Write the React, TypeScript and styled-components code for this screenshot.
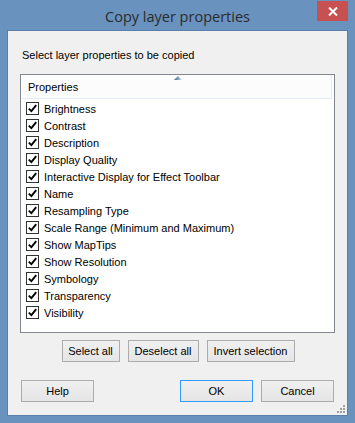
import React from "react";
import styled, { createGlobalStyle, css } from "styled-components";

const Global = createGlobalStyle`
  html, body { margin: 0; padding: 0; }
  body { width: 355px; height: 423px; overflow: hidden; background: #6a94c0; }
`;

const Win = styled.div`
  width: 355px;
  height: 423px;
  box-sizing: border-box;
  background: #6992bf;
  padding: 0 7px 7px 7px;
  display: flex;
  flex-direction: column;
  font-family: "Liberation Sans", Arial, sans-serif;
`;

const TitleBar = styled.div`
  position: relative;
  height: 30px;
  display: flex;
  align-items: center;
  justify-content: center;
  flex: none;
`;

const Title = styled.div`
  font-family: "Open Sans", "Noto Sans", sans-serif;
  font-size: 14.5px;
  color: #2b2b2b;
  margin-top: 2px;
  letter-spacing: 0;
`;

const Close = styled.div`
  position: absolute;
  top: 1px;
  right: 0px;
  width: 31px;
  height: 20px;
  background: #c75050;
  display: flex;
  align-items: center;
  justify-content: center;
`;

const Client = styled.div`
  flex: 1;
  border: 1px solid #5a7fa8;
  background: #f0f0f0;
  display: flex;
  flex-direction: column;
  position: relative;
`;

const Label = styled.div`
  font-size: 11px;
  line-height: 13px;
  color: #000;
  margin: 18px 0 0 14px;
`;

const List = styled.div`
  margin: 12px 0 0 12px;
  width: 315px;
  height: 259px;
  box-sizing: border-box;
  border: 1px solid #828790;
  background: #fff;
  display: flex;
  flex-direction: column;
`;

const Header = styled.div`
  position: relative;
  height: 24px;
  margin-right: 2px;
  box-sizing: border-box;
  background: #fcfcfc;
  border-bottom: 1px solid #e3ecf6;
  border-right: 1px solid #e3ecf6;
  display: flex;
  align-items: center;
  padding-left: 7px;
  font-size: 11px;
  color: #000;
`;

const SortArrow = styled.svg`
  position: absolute;
  left: 153px;
  top: 1px;
`;

const Rows = styled.div`
  display: flex;
  flex-direction: column;
  padding-top: 1px;
`;

const Row = styled.div`
  height: 17px;
  display: flex;
  align-items: center;
  padding-left: 5px;
  font-size: 11px;
  color: #000;
`;

const Box = styled.div`
  width: 13px;
  height: 13px;
  box-sizing: border-box;
  border: 1px solid #333;
  background: #fff;
  display: flex;
  align-items: center;
  justify-content: center;
  margin-right: 5px;
  flex: none;
`;

const ActionRow = styled.div`
  display: flex;
  justify-content: center;
  gap: 8px;
  margin-top: 7px;
  padding-left: 1px;
`;

const Btn = styled.div<{ $w: number; $default?: boolean }>`
  width: ${(p) => p.$w}px;
  height: 22px;
  box-sizing: border-box;
  border: 1px solid #acacac;
  background: linear-gradient(#f0f0f0, #e5e5e5);
  display: flex;
  align-items: center;
  justify-content: center;
  font-size: 11px;
  color: #000;
  ${(p) =>
    p.$default &&
    css`
      border-color: #3399ff;
      background: linear-gradient(#ecf4fc, #dcecfc);
      background: linear-gradient(#f0f0f0, #e5e5e5);
    `}
`;

const BottomRow = styled.div`
  display: flex;
  margin-top: 18px;
  padding: 0 13px;
  gap: 8px;
`;

const Spacer = styled.div`
  flex: 1;
`;

const Grip = styled.svg`
  position: absolute;
  right: 2px;
  bottom: 2px;
`;

const items = [
  "Brightness",
  "Contrast",
  "Description",
  "Display Quality",
  "Interactive Display for Effect Toolbar",
  "Name",
  "Resampling Type",
  "Scale Range (Minimum and Maximum)",
  "Show MapTips",
  "Show Resolution",
  "Symbology",
  "Transparency",
  "Visibility",
];

const Check = () => (
  <svg width="9" height="9" viewBox="0 0 9 9">
    <path d="M0.8 4.6 L3.4 7.2 L8.2 1.2" fill="none" stroke="#000" strokeWidth="1.9" />
  </svg>
);

export default function App() {
  return (
    <>
      <Global />
      <Win>
        <TitleBar>
          <Title>Copy layer properties</Title>
          <Close>
            <svg width="10" height="9" viewBox="0 0 10 9">
              <path d="M1 0.5 L9 8.5 M9 0.5 L1 8.5" stroke="#fff" strokeWidth="2" />
            </svg>
          </Close>
        </TitleBar>
        <Client>
          <Label>Select layer properties to be copied</Label>
          <List>
            <Header>
              Properties
              <SortArrow width="8" height="4" viewBox="0 0 8 4">
                <defs>
                  <linearGradient id="ga" x1="0" y1="0" x2="1" y2="0">
                    <stop offset="0" stopColor="#3c5e80" />
                    <stop offset="1" stopColor="#c6e2f6" />
                  </linearGradient>
                </defs>
                <path d="M0 4 L4 0 L8 4 Z" fill="url(#ga)" />
              </SortArrow>
            </Header>
            <Rows>
              {items.map((t) => (
                <Row key={t}>
                  <Box>
                    <Check />
                  </Box>
                  {t}
                </Row>
              ))}
            </Rows>
          </List>
          <ActionRow>
            <Btn $w={58}>Select all</Btn>
            <Btn $w={71}>Deselect all</Btn>
            <Btn $w={88}>Invert selection</Btn>
          </ActionRow>
          <BottomRow>
            <Btn $w={73}>Help</Btn>
            <Spacer />
            <Btn $w={73} $default>
              OK
            </Btn>
            <Btn $w={73}>Cancel</Btn>
          </BottomRow>
          <Grip width="8" height="8" viewBox="0 0 8 8">
            {[
              [6, 0],
              [3, 3],
              [6, 3],
              [0, 6],
              [3, 6],
              [6, 6],
            ].map(([x, y]) => (
              <rect key={`${x}-${y}`} x={x} y={y} width="2" height="2" fill="#a0a0a0" />
            ))}
          </Grip>
        </Client>
      </Win>
    </>
  );
}
